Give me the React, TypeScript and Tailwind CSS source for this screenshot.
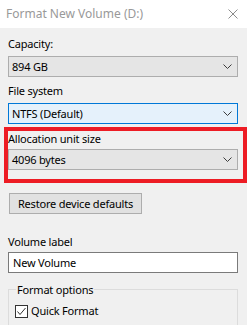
import React from 'react';

function Chevron() {
  return (
    <svg width="9" height="5" viewBox="0 0 9 5" className="shrink-0">
      <polyline points="0.5,0.5 4.5,4.5 8.5,0.5" fill="none" stroke="#3c3c3c" strokeWidth="1" />
    </svg>
  );
}

function Combo({ value, focused, className = 'ml-[8px]' }: { value: string; focused?: boolean; className?: string }) {
  return (
    <div
      className={`${className} w-[230px] h-[21px] flex items-center justify-between pl-[3px] pr-[5px] border ${
        focused ? 'bg-[#e5f1fb] border-[#0078d7]' : 'bg-[#e5e5e5] border-[#adadad]'
      }`}
    >
      <span className="leading-[16px]">{value}</span>
      <Chevron />
    </div>
  );
}

function Label({ text, className = '' }: { text: string; className?: string }) {
  return <div className={`ml-[8px] leading-[16px] ${className}`}>{text}</div>;
}

export default function App() {
  return (
    <div className="w-[247px] h-[325px] overflow-hidden bg-[#f0f0f0] text-[11px] tracking-[-0.2px] text-black font-['Segoe_UI','Noto_Sans',sans-serif]">
      {/* Title bar */}
      <div className="h-[28px] bg-white flex items-center justify-between pl-[6px] pr-[9px]">
        <span className="text-[#999999] text-[12px] tracking-normal leading-[16px]">Format New Volume (D:)</span>
        <svg width="10" height="10" viewBox="0 0 10 10">
          <path d="M0.5 0.5 L9.5 9.5 M9.5 0.5 L0.5 9.5" stroke="#8c8c8c" strokeWidth="1" />
        </svg>
      </div>

      <Label text="Capacity:" className="mt-[8px]" />
      <div className="mt-[4px]">
        <Combo value="894 GB" />
      </div>

      <Label text="File system" className="mt-[6px]" />
      <div className="mt-[4px]">
        <Combo value="NTFS (Default)" focused />
      </div>

      {/* Highlighted section */}
      <div className="mt-[3px] ml-[4px] w-[243px] border-[4px] border-[#ed1c24] pb-[9px]">
        <div className="leading-[16px]">Allocation unit size</div>
        <div className="mt-[2px]">
          <Combo value="4096 bytes" className="ml-0" />
        </div>
      </div>

      <button className="mt-[10px] ml-[9px] w-[133px] h-[21px] flex items-center justify-center bg-[#e1e1e1] border border-[#adadad] leading-[16px]">
        Restore device defaults
      </button>

      <Label text="Volume label" className="mt-[20px]" />
      <div className="mt-[2px] ml-[8px] w-[230px] h-[21px] bg-white border border-[#7a7a7a] flex items-center pl-[4px]">
        <span className="leading-[16px]">New Volume</span>
      </div>

      <fieldset className="mt-[8px] ml-[8px] w-[230px] h-[80px] border border-[#dcdcdc] pl-[6px]">
        <legend className="ml-[1px] px-[1px] leading-[16px] relative top-[1px]">Format options</legend>
        <div className="mt-[6px] flex items-center gap-[3px]">
          <div className="w-[13px] h-[13px] border border-[#333333] bg-white flex items-center justify-center">
            <svg width="11" height="11" viewBox="0 0 11 11">
              <polyline points="1.5,5.5 4,8.5 9.5,2" fill="none" stroke="#333333" strokeWidth="1" />
            </svg>
          </div>
          <span className="leading-[16px]">Quick Format</span>
        </div>
      </fieldset>
    </div>
  );
}
